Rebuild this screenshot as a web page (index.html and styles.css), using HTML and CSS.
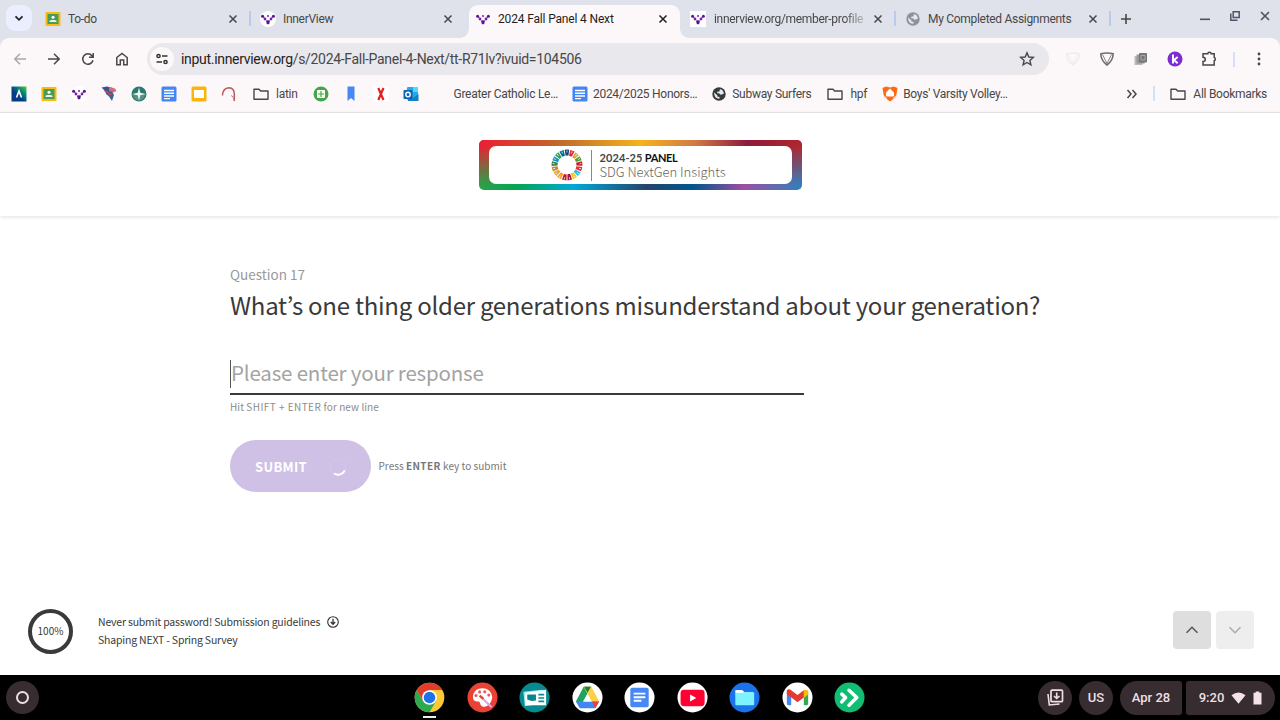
FILE: index.html
```html
<!DOCTYPE html>
<html lang="en">
<head>
    <meta charset="UTF-8">
    <meta name="viewport" content="width=device-width, initial-scale=1.0">
    <title>2024 Fall Panel 4 Next</title>
    <link rel="stylesheet" href="styles.css">
</head>
<body>
    <!-- shared icons -->
    <svg class="sprite" width="0" height="0">
        <symbol id="classroom" viewBox="0 0 16 16">
            <rect x="0.5" y="1" width="15" height="14" rx="1" fill="#f8bb12"/>
            <rect x="2.5" y="3" width="11" height="10" fill="#4a9b5a"/>
            <circle cx="8" cy="6.3" r="1.5" fill="#fff"/>
            <path d="M4.5 11V9.8C5 8.6 11 8.6 11.5 9.8V11z" fill="#e8f5ea"/>
        </symbol>
        <symbol id="innerview" viewBox="0 0 16 16">
            <path d="M2.5 5.5L5 7.5M13.5 5.5L11 7.5" stroke="#6a1b9a" stroke-width="0.8"/>
            <circle cx="2.6" cy="5.2" r="1.5" fill="#5b168c"/>
            <circle cx="13.4" cy="5.2" r="1.5" fill="#5b168c"/>
            <circle cx="5" cy="8" r="1.4" fill="#7a1fa8"/>
            <circle cx="11" cy="8" r="1.4" fill="#7a1fa8"/>
            <circle cx="8" cy="5" r="1" fill="#7a1fa8"/>
            <path d="M6 9.6Q8 8.8 10 9.6L9.2 13Q8 13.7 6.8 13z" fill="#5b168c"/>
        </symbol>
        <symbol id="close" viewBox="0 0 10 10">
            <path d="M1.5 1.5L8.5 8.5M8.5 1.5L1.5 8.5" stroke="currentColor" stroke-width="1.5"/>
        </symbol>
        <symbol id="globe" viewBox="0 0 16 16">
            <circle cx="8" cy="8" r="6.7" fill="currentColor"/>
            <path d="M3.2 6.6L6.3 9.2V10.5L8.5 11V12.8C5 13 3 10.5 3.2 6.6zM9 3.2C10.5 3 12.8 5 12.9 7.5L11.5 8.2L9.5 8.7L8 7.3H6.2V5.8L8.3 5.6z" fill="#e6e8ef"/>
        </symbol>
        <symbol id="docs" viewBox="0 0 16 16">
            <rect x="0.5" y="0.5" width="15" height="15" rx="1.5" fill="#4285f4"/>
            <path d="M3 4.5H13M3 7.3H13M3 10H13M3 12.6H9" stroke="#fff" stroke-width="1.4"/>
        </symbol>
        <symbol id="folder" viewBox="0 0 16 16">
            <path d="M1 3.2H6L7.7 5H15V13.2H1z" fill="none" stroke="#474747" stroke-width="1.4" stroke-linejoin="round"/>
        </symbol>
        <symbol id="shield" viewBox="0 0 16 16">
            <path d="M1.8 2.7Q8 1.2 14.2 2.7Q14 9.5 8 14Q2 9.5 1.8 2.7z" fill="none" stroke="currentColor" stroke-width="1.6" stroke-linejoin="round"/>
            <path d="M3.5 3.5L8 12.5M12.5 3.5L8 12.5" stroke="currentColor" stroke-width="0.8"/>
        </symbol>
    </svg>

    <div class="tab-strip">
        <div class="tab-search">
            <svg width="10" height="10" viewBox="0 0 10 10"><path d="M1.5 3.3L5 6.8L8.5 3.3" fill="none" stroke="#1f1f1f" stroke-width="1.7"/></svg>
        </div>
        <div class="tab">
            <svg class="icon"><use href="#classroom"/></svg>
            <span class="tab-title">To-do</span>
            <svg class="close"><use href="#close"/></svg>
        </div>
        <div class="tab">
            <svg class="icon round"><use href="#innerview"/></svg>
            <span class="tab-title">InnerView</span>
            <svg class="close"><use href="#close"/></svg>
        </div>
        <div class="tab active">
            <svg class="icon"><use href="#innerview"/></svg>
            <span class="tab-title">2024 Fall Panel 4 Next</span>
            <svg class="close"><use href="#close"/></svg>
        </div>
        <div class="tab">
            <svg class="icon square"><use href="#innerview"/></svg>
            <span class="tab-title fade">innerview.org/member-profile</span>
            <svg class="close"><use href="#close"/></svg>
        </div>
        <div class="tab">
            <svg class="icon grey"><use href="#globe"/></svg>
            <span class="tab-title">My Completed Assignments</span>
            <svg class="close"><use href="#close"/></svg>
        </div>
        <svg class="new-tab" viewBox="0 0 12 12"><path d="M6 1V11M1 6H11" stroke="#474747" stroke-width="1.6"/></svg>
        <div class="window-buttons">
            <svg width="10" height="10" viewBox="0 0 10 10"><path d="M0 8.3H10" stroke="#4c5568" stroke-width="1.6"/></svg>
            <svg width="10" height="10" viewBox="0 0 10 10"><path d="M3.2 0.8H9.2V6.6H3.2zM0.8 2.5V9.2H7.5" fill="none" stroke="#4c5568" stroke-width="1.5"/></svg>
            <svg width="10" height="10" viewBox="0 0 10 10"><path d="M1 1L9 9M9 1L1 9" stroke="#4c5568" stroke-width="1.7"/></svg>
        </div>
    </div>

    <div class="toolbar">
        <div class="nav-icons">
            <svg class="icon" viewBox="0 0 16 16"><path d="M14 8H3M8 2.8L2.8 8L8 13.2" fill="none" stroke="#a9a7a9" stroke-width="1.5"/></svg>
            <svg class="icon" viewBox="0 0 16 16"><path d="M2 8H13M8 2.8L13.2 8L8 13.2" fill="none" stroke="#474747" stroke-width="1.5"/></svg>
            <svg class="icon" viewBox="0 0 16 16"><path d="M13 9.3A5.2 5.2 0 1 1 12 4.7L13 6M13.2 2V6.3H9" fill="none" stroke="#474747" stroke-width="1.5"/></svg>
            <svg class="icon" viewBox="0 0 16 16"><path d="M2.8 6.5L8 2.4L13.2 6.5V13.7H9.7V9H6.3V13.7H2.8z" fill="none" stroke="#474747" stroke-width="1.5"/></svg>
        </div>
        <div class="address-bar">
            <span class="site-info">
                <svg width="12" height="12" viewBox="0 0 12 12"><g fill="none" stroke="#333" stroke-width="1.5"><circle cx="2.5" cy="3" r="1.6"/><path d="M6 3H11.5M0.5 9H6"/><circle cx="9.5" cy="9" r="1.6"/></g></svg>
            </span>
            <span class="url"><b>input.innerview.org</b>/s/2024-Fall-Panel-4-Next/tt-R71lv?ivuid=104506</span>
            <svg class="icon" viewBox="0 0 16 16"><path d="M8 1.8L9.8 6L14.3 6.4L10.9 9.4L11.9 13.9L8 11.5L4.1 13.9L5.1 9.4L1.7 6.4L6.2 6z" fill="none" stroke="#474747" stroke-width="1.4"/></svg>
        </div>
        <div class="extensions">
            <svg class="icon faint"><use href="#shield"/></svg>
            <svg class="icon"><use href="#shield"/></svg>
            <svg class="icon" viewBox="0 0 16 16"><rect x="1.5" y="5" width="8" height="9" fill="#bbb"/><rect x="3.5" y="3.5" width="8" height="9" fill="#999"/><rect x="6" y="2" width="8" height="9.5" rx="1" fill="#777"/><path d="M8 4.5H12V9H8z" fill="none" stroke="#aaa"/></svg>
            <svg class="icon" viewBox="0 0 16 16"><circle cx="8" cy="8" r="7.5" fill="#7d2bd3"/><path d="M6 3.5V12.5M10.7 6L7 9L10.7 12.3" fill="none" stroke="#fff" stroke-width="2"/></svg>
            <svg class="icon" viewBox="0 0 16 16"><path d="M2 2.8H6.8A1.7 1.5 0 0 1 10.2 2.8H13.2V6.5A1.5 1.7 0 0 1 13.2 9.8V14H2V10.5Q4.3 10.3 4.3 8.4Q4.3 6.5 2 6.3z" fill="none" stroke="#474747" stroke-width="1.5"/></svg>
        </div>
        <span class="divider"></span>
        <svg class="icon menu" viewBox="0 0 16 16"><g fill="#474747"><circle cx="8" cy="3" r="1.4"/><circle cx="8" cy="8" r="1.4"/><circle cx="8" cy="13" r="1.4"/></g></svg>
    </div>

    <div class="bookmarks">
        <svg class="icon" viewBox="0 0 16 16"><defs><linearGradient id="aeries" x1="0" y1="1" x2="1" y2="0"><stop offset="0.4" stop-color="#053a84"/><stop offset="0.7" stop-color="#008c7a"/><stop offset="1" stop-color="#5fc92e"/></linearGradient></defs><rect x="0.5" y="0.5" width="15" height="15" fill="url(#aeries)"/><path d="M5.5 11.5L8 5L10.5 11.5" fill="none" stroke="#fff" stroke-width="1.6"/></svg>
        <svg class="icon"><use href="#classroom"/></svg>
        <svg class="icon round"><use href="#innerview"/></svg>
        <svg class="icon" viewBox="0 0 16 16"><path d="M0.5 1.5L6 0.5L12 2L9 7L4 5z" fill="#35588e"/><path d="M8 1L14 2.5L15.5 5L11 7L8 5z" fill="#d86a7c"/><path d="M4 5L11 5.5L13 9L11 15L8 10.5L5 8z" fill="#37659c"/><path d="M3 4.5L8 7M7 9L11 8" stroke="#c44f62" stroke-width="1.2"/></svg>
        <svg class="icon" viewBox="0 0 16 16"><circle cx="8" cy="8" r="7.5" fill="#28796f"/><path d="M1 8Q4 7 8 8Q12 7 15 8L12 13Q8 16 4 13z" fill="#5b8f88"/><path d="M8 1.5L9.3 6.7L14.5 8L9.3 9.3L8 14.5L6.7 9.3L1.5 8L6.7 6.7z" fill="#eef5f3"/></svg>
        <svg class="icon"><use href="#docs"/></svg>
        <svg class="icon" viewBox="0 0 16 16"><rect x="0.5" y="0.5" width="15" height="15" rx="1.5" fill="#f9b50b"/><rect x="3" y="4" width="10" height="8" fill="#fff"/></svg>
        <svg class="icon" viewBox="0 0 16 16"><path d="M1.5 9.5Q1.8 2 8 1.7Q13.3 2 13.3 8V15" fill="none" stroke="#b85a5d" stroke-width="1.5"/><path d="M10 9.5Q12.5 10 13 14" fill="none" stroke="#c98486"/></svg>
        <span class="bookmark folder"><svg class="icon"><use href="#folder"/></svg>latin</span>
        <svg class="icon" viewBox="0 0 16 16"><circle cx="8" cy="8" r="7.5" fill="#43a748"/><rect x="4" y="4" width="8" height="8" rx="1" fill="#fff"/><path d="M8 5V11M5 8H11" stroke="#43a748" stroke-width="1.2"/></svg>
        <svg class="icon" viewBox="0 0 16 16"><path d="M4.5 0.5H11.5V15L8 12L4.5 15z" fill="#4788f5"/></svg>
        <svg class="icon" viewBox="0 0 16 16"><rect x="0.5" y="0.5" width="15" height="15" fill="#fff"/><path d="M5.3 2L10.5 14M10.5 2L5.3 14" stroke="#e51f1f" stroke-width="2.2"/></svg>
        <svg class="icon" viewBox="0 0 16 16"><rect x="4" y="1" width="11" height="13" rx="1" fill="#28a8ea"/><path d="M5 8L10 12L15.5 8V15H5z" fill="#1380c4"/><rect x="10" y="1" width="5" height="5" fill="#50d9ff"/><rect x="0.5" y="4" width="9" height="9" rx="1" fill="#0764b8"/><circle cx="5" cy="8.5" r="2.2" fill="none" stroke="#fff" stroke-width="1.4"/></svg>
        <span class="bookmark"><span class="icon"></span>Greater Catholic Le…</span>
        <span class="bookmark"><svg class="icon"><use href="#docs"/></svg>2024/2025 Honors…</span>
        <span class="bookmark"><svg class="icon dark"><use href="#globe"/></svg>Subway Surfers</span>
        <span class="bookmark folder"><svg class="icon"><use href="#folder"/></svg>hpf</span>
        <span class="bookmark"><svg class="icon" viewBox="0 0 16 16"><path d="M0.5 2L4 0.5L8 1.5L12 0.5L15.5 2L14 11L8 15.5L2 11z" fill="#fb6a15"/><path d="M8 2.5L12 6.5V10L10.5 10.5H5.5L4 10V6.5z" fill="#fff"/><path d="M1.5 9.5L5 12.5M14.5 9.5L11 12.5" stroke="#fff" stroke-width="0.9"/></svg>Boys' Varsity Volley…</span>
        <div class="bookmarks-end">
            <svg width="12" height="12" viewBox="0 0 12 12"><path d="M1.5 2L5 6L1.5 10M6.5 2L10 6L6.5 10" fill="none" stroke="#474747" stroke-width="1.5"/></svg>
            <span class="divider"></span>
            <span class="bookmark"><svg class="icon"><use href="#folder"/></svg>All Bookmarks</span>
        </div>
    </div>

    <div class="page">
        <header class="page-header">
            <div class="banner">
                <div class="banner-inner">
                    <svg id="wheel" class="wheel" viewBox="0 0 32 32"></svg>
                    <div class="banner-text">
                        <div class="banner-title"><span>2024-25</span> PANEL</div>
                        <div class="banner-sub">SDG NextGen Insights</div>
                    </div>
                </div>
            </div>
        </header>

        <main class="question">
            <div class="question-number">Question 17</div>
            <h1>What’s one thing older generations misunderstand about your generation?</h1>
            <div class="response">Please enter your response</div>
            <div class="hint">Hit <span>SHIFT + ENTER</span> for new line</div>
            <div class="submit-row">
                <button class="submit">SUBMIT
                    <svg width="18" height="18" viewBox="0 0 18 18"><circle cx="9" cy="9" r="8" fill="none" stroke="#d5c8ea" stroke-width="1"/><path d="M15.8 12.5A7.6 7.6 0 0 1 5 15.6" fill="none" stroke="#fff" stroke-width="1.8"/></svg>
                </button>
                <span class="submit-hint">Press <b>ENTER</b> key to submit</span>
            </div>
        </main>

        <footer class="page-footer">
            <div class="progress">100%</div>
            <div class="footer-text">
                <div>Never submit password! Submission guidelines
                    <svg width="12" height="12" viewBox="0 0 12 12"><circle cx="6" cy="6" r="5.3" fill="none" stroke="#333" stroke-width="1.1"/><path d="M6 2.8V8M3.8 6L6 8.3L8.2 6" fill="none" stroke="#333" stroke-width="1.3"/></svg>
                </div>
                <div>Shaping NEXT - Spring Survey</div>
            </div>
            <button class="step"><svg width="14" height="8" viewBox="0 0 14 8"><path d="M1.5 6.8L7 1.3L12.5 6.8" fill="none" stroke="#555" stroke-width="1.5"/></svg></button>
            <button class="step disabled"><svg width="14" height="8" viewBox="0 0 14 8"><path d="M1.5 1.2L7 6.7L12.5 1.2" fill="none" stroke="#aaa" stroke-width="1.5"/></svg></button>
        </footer>
    </div>

    <div class="shelf">
        <div class="launcher"><span></span></div>
        <div class="apps">
            <div class="app running"><svg viewBox="0 0 32 32"><circle cx="16" cy="16" r="15.3" fill="#fbc934"/><path d="M2.75 8.35A15.3 15.3 0 0 1 29.25 8.35H16L9.4 19.8z" fill="#e33b2e"/><path d="M2.75 8.35L9.4 19.8L22.6 19.8L16 31.3A15.3 15.3 0 0 1 2.75 8.35z" fill="#2da94f"/><circle cx="16" cy="16" r="7.6" fill="#fff"/><circle cx="16" cy="16" r="6" fill="#1a73e8"/></svg></div>
            <div class="app"><svg viewBox="0 0 32 32"><circle cx="16" cy="16" r="15.5" fill="#ea4335"/><path d="M16 6.5C9 6.5 5.8 11.5 6.2 16C6.5 20 9.5 20.2 12 20C14 20 13 24.5 16.5 25.5C21 26.5 26 21 26 15.5C25.5 10 21 6.5 16 6.5z" fill="#fff"/><g fill="#ea5b58"><circle cx="9.3" cy="14" r="1.6"/><circle cx="13" cy="10.2" r="1.6"/><circle cx="18.3" cy="10" r="1.6"/><circle cx="22.5" cy="13.5" r="1.6"/></g><path d="M14 15L25.5 26" stroke="#d7a5f5" stroke-width="2.3"/><path d="M13 14L17 17.5" stroke="#ea4335" stroke-width="2.3"/></svg></div>
            <div class="app"><svg viewBox="0 0 32 32"><circle cx="16" cy="16" r="15.5" fill="#078b91"/><path d="M4.5 10L24 8L26 22L6 25z" fill="#98e8ee"/><path d="M6.5 11L28 8V24H6.5z" fill="#fff"/><path d="M8.5 13H17.5V19L13 19.5L8.5 18z" fill="#07868b"/><path d="M20 13H26M20 16.5H26M20 20H26" stroke="#078b91" stroke-width="1.7"/></svg></div>
            <div class="app"><svg viewBox="0 0 32 32"><circle cx="16" cy="16" r="15.5" fill="#fff"/><path d="M12 5H20L16 12L8.5 25.5L4 20z" fill="#1ea362"/><path d="M12 5H20L28 20H20z" fill="#ffcf48"/><path d="M4 20H28L24 27H8z" fill="#4285f4"/><path d="M12.5 5L16 11L19.5 5z" fill="#188038"/><path d="M20.5 20H28L24 27z" fill="#ea4335"/><path d="M16 12L20.5 20H11.5z" fill="#fff"/></svg></div>
            <div class="app"><svg viewBox="0 0 32 32"><circle cx="16" cy="16" r="15.5" fill="#fff"/><rect x="6.5" y="6" width="19" height="20" rx="2" fill="#4788f5"/><path d="M10 12H22M10 15.7H22M10 19.4H18" stroke="#fff" stroke-width="1.9"/></svg></div>
            <div class="app"><svg viewBox="0 0 32 32"><circle cx="16" cy="16" r="15.5" fill="#fff"/><rect x="3.7" y="8" width="24.8" height="17" rx="3.5" fill="#ff0033"/><path d="M13.5 13V20L20 16.5z" fill="#fff"/></svg></div>
            <div class="app"><svg viewBox="0 0 32 32"><circle cx="16" cy="16" r="15.5" fill="#1a73e8"/><path d="M7 8.5H14L16 10.5H25V14H7z" fill="#fff"/><rect x="6.5" y="10.5" width="19.5" height="13.5" rx="1" fill="#7cf3ff"/><path d="M6.5 8.5H13L15 11H6.5z" fill="#fff"/></svg></div>
            <div class="app"><svg viewBox="0 0 32 32"><circle cx="16" cy="16" r="15.5" fill="#fff"/><path d="M5 10V22.5Q5 24 6.5 24H9.5V11z" fill="#4285f4"/><path d="M22.5 11V24H25.5Q27 24 27 22.5V10z" fill="#34a853"/><path d="M22.5 8L27 8.5V13L22.5 16.5z" fill="#fbbc04"/><path d="M5 8.5Q7 6.5 9.5 8.5L16 13.5L22.5 8.5V16L16 21L5 12.5z" fill="#e33b2e"/></svg></div>
            <div class="app"><svg viewBox="0 0 32 32"><circle cx="16" cy="16" r="15.5" fill="#12bd73"/><path d="M8 12.5L12 16L8 20.5M15.5 8.5L23.5 16L15.5 24" fill="none" stroke="#fff" stroke-width="3.6" stroke-linecap="round" stroke-linejoin="round"/></svg></div>
        </div>
        <div class="status">
            <div class="pill circle"><svg width="18" height="18" viewBox="0 0 18 18"><rect x="5" y="1.2" width="11.5" height="11.5" rx="1" fill="none" stroke="#f0dfe2" stroke-width="1.7"/><path d="M2 5L3.3 16L13.5 15M10.7 3.5V9.5M8 7L10.7 9.5L13.5 7" fill="none" stroke="#f0dfe2" stroke-width="1.6"/></svg></div>
            <div class="pill circle">US</div>
            <div class="pill date">Apr 28</div>
            <div class="pill clock">9:20
                <svg width="15" height="12" viewBox="0 0 15 12"><path d="M0.5 3.3Q7.5 -2.3 14.5 3.3L7.5 11.7z" fill="#f4e3e6"/></svg>
                <svg width="9" height="14" viewBox="0 0 9 14"><path d="M0.5 1.8H2.7V0.5H6.3V1.8H8.5V13.5H0.5z" fill="#f4e3e6"/></svg>
            </div>
        </div>
    </div>

    <script>
        // one segment per goal, clockwise from the top
        const colors = ['#19486a', '#e5243b', '#dda63a', '#4c9f38', '#c5192d', '#e52c30', '#26bde2', '#fcc30b', '#a21942',
            '#c5192d', '#fd9d24', '#e5a63a', '#bf8b2e', '#3f7e44', '#0a97d9', '#2f9f55', '#00689d'];
        const wheel = document.getElementById('wheel');

        function addArc(color, i, radius, width, size) {
            const arc = document.createElementNS('http://www.w3.org/2000/svg', 'circle');
            arc.setAttribute('cx', 16);
            arc.setAttribute('cy', 16);
            arc.setAttribute('r', radius);
            arc.setAttribute('pathLength', 17);
            arc.setAttribute('stroke', color);
            arc.setAttribute('stroke-width', width);
            arc.setAttribute('stroke-dasharray', `${size} ${17 - size}`);
            arc.setAttribute('transform', `rotate(${(i - size / 2) * 360 / 17 - 90} 16 16)`);
            wheel.appendChild(arc);
        }

        colors.forEach((color, i) => {
            addArc(color, i, 12.4, 6, 0.82);
            addArc('#fff', i, 13.5, 2, 0.15);
        });
    </script>
</body>
</html>
```
FILE: styles.css
```css
* {
    margin: 0;
    padding: 0;
    box-sizing: border-box;
}

body {
    width: 1280px;
    height: 720px;
    overflow: hidden;
    display: flex;
    flex-direction: column;
    font-family: Roboto, sans-serif;
    font-size: 12px;
    color: #474747;
    background: #dfe2eb;
}

svg {
    display: block;
    flex-shrink: 0;
}

.sprite {
    position: absolute;
}

.icon {
    width: 16px;
    height: 16px;
    flex-shrink: 0;
}

/* Tabs */
.tab-strip {
    height: 38px;
    display: flex;
    align-items: flex-start;
    padding-left: 6px;
}

.tab-search {
    width: 26px;
    height: 26px;
    margin: 5px 6px 0 0;
    border-radius: 9px;
    background: #ebeeff;
    display: flex;
    align-items: center;
    justify-content: center;
}

.tab {
    position: relative;
    width: 215px;
    height: 38px;
    display: flex;
    align-items: center;
    padding: 0 15px 1px 7px;
}

.tab::after {
    content: "";
    position: absolute;
    right: 2px;
    top: 11px;
    width: 2px;
    height: 15px;
    background: #b9cbe9;
}

.tab:nth-child(3)::after {
    display: none;
}

.tab.active::before {
    content: "";
    position: absolute;
    left: 1px;
    right: 3px;
    top: 5px;
    bottom: 0;
    border-radius: 9px 9px 0 0;
    background: #fcf7f9;
}

/* curved feet of the active tab */
.tab.active::after {
    left: -8px;
    right: -6px;
    top: auto;
    bottom: 0;
    width: auto;
    height: 9px;
    background: radial-gradient(circle at 0 0, transparent 8.5px, #fcf7f9 9px) left / 9px 9px no-repeat,
        radial-gradient(circle at 100% 0, transparent 8.5px, #fcf7f9 9px) right / 9px 9px no-repeat;
}

.tab > * {
    position: relative;
}

.tab-title {
    flex: 1;
    margin: 0 6px 0 7px;
    letter-spacing: -0.3px;
    white-space: nowrap;
}

.active .tab-title {
    color: #1f1f1f;
    letter-spacing: -0.16px;
}

.fade {
    margin-left: 8px;
    -webkit-mask-image: linear-gradient(90deg, #000 85%, rgba(0, 0, 0, 0.15));
    mask-image: linear-gradient(90deg, #000 85%, rgba(0, 0, 0, 0.15));
}

.close {
    width: 10px;
    height: 10px;
}

.active .close {
    color: #1f1f1f;
}

.round {
    background: #fff;
    border-radius: 50%;
}

.square {
    background: #fff;
}

.grey {
    color: #8f9299;
}

.dark {
    color: #37393d;
}

.new-tab {
    width: 12px;
    height: 12px;
    margin: 13px 0 0 7px;
}

.window-buttons {
    display: flex;
    gap: 20px;
    margin: 11px 10px 0 auto;
}

/* Toolbar */
.toolbar {
    height: 41px;
    display: flex;
    align-items: center;
    padding: 1px 13px 0 12px;
    background: #fcf7f9;
    border-radius: 9px 9px 0 0;
}

.nav-icons,
.extensions {
    display: flex;
    gap: 18px;
}

.address-bar {
    width: 903px;
    height: 32px;
    margin-left: 17px;
    padding: 0 14px 0 3px;
    border-radius: 16px;
    background: #e9e8ed;
    display: flex;
    align-items: center;
}

.site-info {
    width: 24px;
    height: 24px;
    border-radius: 50%;
    background: #fcf7f9;
    display: flex;
    align-items: center;
    justify-content: center;
}

.url {
    flex: 1;
    margin-left: 7px;
    font-size: 14px;
    letter-spacing: -0.31px;
}

.url b {
    font-weight: 400;
    color: #1f1f1f;
}

.extensions {
    margin-left: 16px;
    color: #6e6e6e;
}

.faint {
    color: #eeecee;
}

.divider {
    width: 2px;
    height: 15px;
    background: #d3e0fa;
}

.extensions + .divider {
    margin-left: 16px;
}

.menu {
    margin-left: 16px;
}

/* Bookmarks bar */
.bookmarks {
    height: 34px;
    display: flex;
    align-items: center;
    gap: 14px;
    padding: 0 13px 4px 11px;
    background: #fcf7f9;
    border-bottom: 1px solid #ebe8ea;
    letter-spacing: -0.28px;
}

.bookmark {
    display: flex;
    align-items: center;
    gap: 5px;
    white-space: nowrap;
}

.bookmark.folder {
    gap: 7px;
    margin: 0 1px 0 2px;
}

.bookmarks-end {
    display: flex;
    align-items: center;
    gap: 15px;
    margin-left: auto;
}

.bookmarks-end .bookmark {
    gap: 7px;
}

/* Survey page */
.page {
    height: 562px;
    display: flex;
    flex-direction: column;
    background: #fff;
    font-family: "Noto Sans CJK KR", "Open Sans", sans-serif;
    color: #3a3a3a;
}

.page-header {
    height: 103px;
    padding: 27px 0 0 478.5px;
    box-shadow: 0 1px 4px rgba(0, 0, 0, 0.12);
}

.banner {
    position: relative;
    width: 323px;
    height: 50px;
    padding: 6px 10px;
    border-radius: 5px;
    overflow: hidden;
    background: linear-gradient(90deg, #2fa04a, #00a651 12%, #00a9d8 29%, #24436d 52%, #00568f 66%, #9b4f9f 82%, #2f82bb);
}

.banner::before {
    content: "";
    position: absolute;
    inset: 0;
    background: linear-gradient(90deg, #ee1c35, #bd6b2b 25%, #f5b31d 50%, #d07a45 67%, #8d1a3c 83%, #b3262b);
    -webkit-mask-image: linear-gradient(#000 10%, transparent 90%);
    mask-image: linear-gradient(#000 10%, transparent 90%);
}

.banner-inner {
    position: relative;
    height: 38px;
    padding-left: 62px;
    border-radius: 7px;
    background: #fff;
    display: flex;
    align-items: center;
}

.wheel {
    width: 32px;
    height: 32px;
    fill: none;
}

.banner-text {
    height: 31px;
    margin-left: 8px;
    padding-left: 8px;
    border-left: 1px solid #888;
    white-space: nowrap;
}

.banner-title {
    font: 700 11px/15px Lato, sans-serif;
    letter-spacing: -0.4px;
    color: #111;
}

.banner-title span {
    color: #444;
    letter-spacing: 0.1px;
}

.banner-sub {
    font-size: 13px;
    font-weight: 300;
    line-height: 13px;
    color: #666;
}

.question {
    flex: 1;
    padding: 47px 0 0 230px;
}

.question-number {
    font-size: 13.5px;
    line-height: 22px;
    color: #999;
}

.question h1 {
    font-size: 24px;
    font-weight: 400;
    letter-spacing: -0.25px;
    line-height: 40px;
    white-space: nowrap;
}

.response {
    width: 574px;
    height: 36px;
    margin-top: 34px;
    border-bottom: 2px solid #3a3a3a;
    font-size: 20.5px;
    letter-spacing: -0.18px;
    line-height: 26px;
    color: #a3a3a3;
}

.response::before {
    content: "";
    float: left;
    width: 1px;
    height: 28px;
    margin-top: 1px;
    background: #555;
}

.hint {
    margin-top: 4px;
    font-size: 10px;
    letter-spacing: 0.07px;
    line-height: 16px;
    color: #8c8c8c;
}

.hint span {
    letter-spacing: 0.45px;
}

.submit-row {
    display: flex;
    align-items: center;
    margin-top: 25px;
}

.submit {
    width: 141px;
    height: 52px;
    padding: 1px 24px 0 25px;
    border: none;
    border-radius: 26px;
    background: #cfc0e5;
    color: #fff;
    font-family: inherit;
    font-size: 13px;
    font-weight: 700;
    letter-spacing: 0.3px;
    display: flex;
    align-items: center;
    justify-content: space-between;
}

.submit-hint {
    margin: -2px 0 0 7.5px;
    font-size: 10px;
    letter-spacing: 0.03px;
    color: #777;
}

.submit-hint b {
    letter-spacing: 0.4px;
}

.page-footer {
    display: flex;
    align-items: center;
    padding: 0 26px 21px 28px;
}

.progress {
    width: 45px;
    height: 45px;
    border: 4px solid #3a3a3a;
    border-radius: 50%;
    font-size: 10px;
    line-height: 36px;
    text-align: center;
}

.footer-text {
    flex: 1;
    margin: -1px 0 0 25px;
    font-size: 10.5px;
    letter-spacing: -0.2px;
    line-height: 18px;
}

.footer-text div {
    display: flex;
    align-items: center;
    gap: 7px;
}

.step {
    width: 38px;
    height: 38px;
    margin: -3px 0 0 5px;
    border: none;
    border-radius: 4px;
    background: #dedede;
    display: flex;
    align-items: center;
    justify-content: center;
}

.step.disabled {
    background: #eee;
}

/* Shelf */
.shelf {
    height: 45px;
    display: flex;
    align-items: center;
    justify-content: space-between;
    padding: 0 5px 0 6px;
    background: #000;
}

.launcher {
    width: 33px;
    height: 33px;
    margin-right: 375px;
    border-radius: 50%;
    background: #372d31;
    display: flex;
    align-items: center;
    justify-content: center;
}

.launcher span {
    width: 13px;
    height: 13px;
    border: 2px solid #f0dfe2;
    border-radius: 50%;
}

.apps {
    display: flex;
    gap: 21.5px;
}

.app {
    position: relative;
    width: 31px;
    height: 31px;
}

.running::after {
    content: "";
    position: absolute;
    left: 9px;
    bottom: -5px;
    width: 13px;
    height: 2px;
    background: #eee;
}

.status {
    display: flex;
    margin-left: auto;
    color: #f0dfe2;
    font-size: 13px;
    font-weight: 500;
}

.pill {
    height: 34px;
    background: #372d31;
    display: flex;
    align-items: center;
    justify-content: center;
}

.circle {
    width: 34px;
    margin-right: 7px;
    border-radius: 50%;
}

.date {
    width: 62px;
    margin-right: 4px;
    border-radius: 17px 3px 3px 17px;
}

.clock {
    width: 89px;
    gap: 7px;
    border-radius: 3px 17px 17px 3px;
}
```
